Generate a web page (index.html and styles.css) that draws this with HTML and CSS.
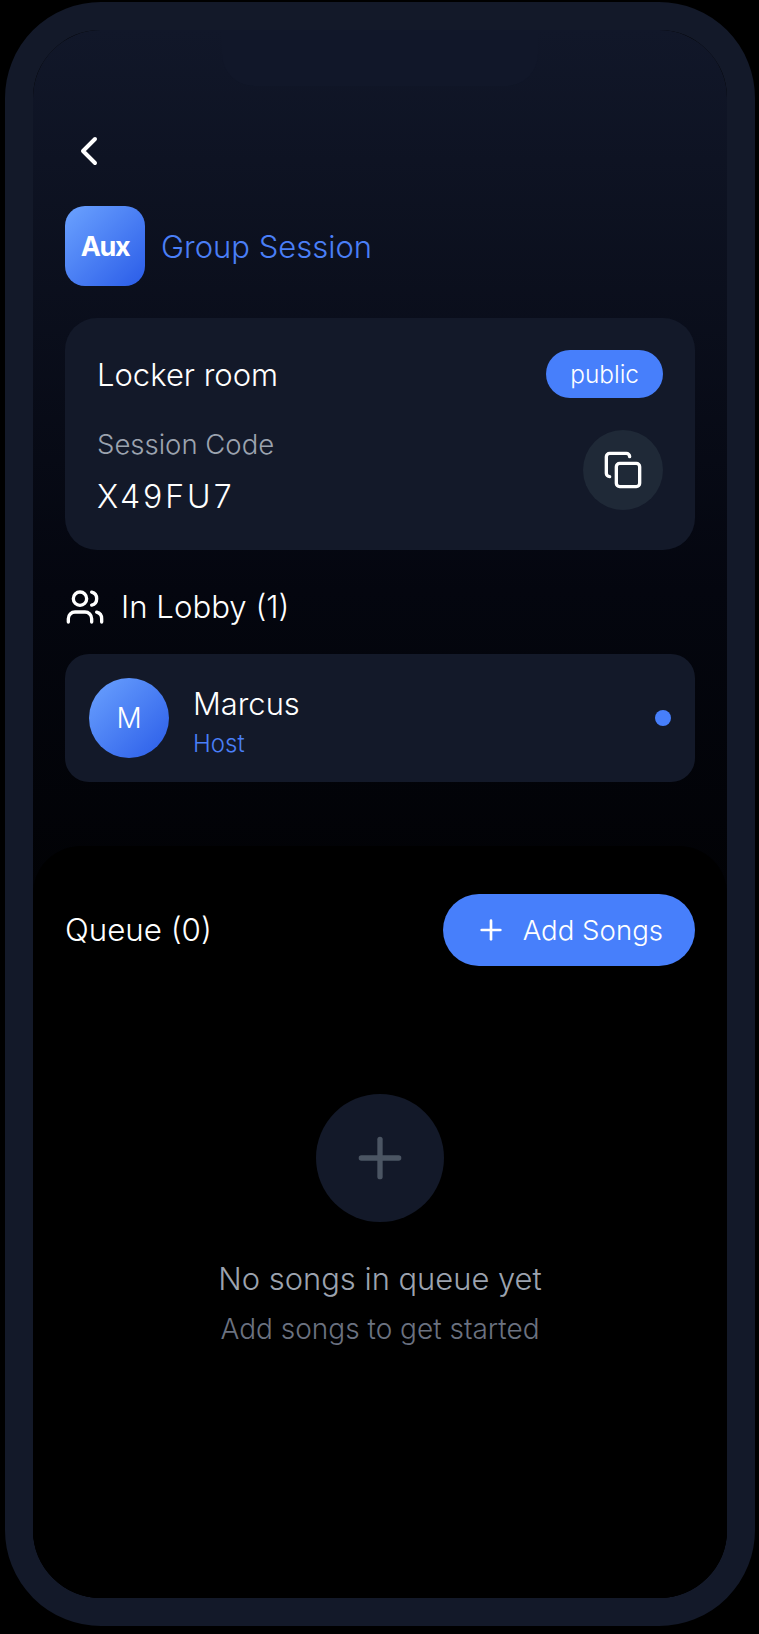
FILE: index.html
```html
<!DOCTYPE html>
<html lang="en">
  <head>
    <meta charset="UTF-8" />
    <meta name="viewport" content="width=device-width, initial-scale=1.0" />
    <title>Group Session</title>
    <link rel="stylesheet" href="styles.css">
  </head>
  <body>
    <div class="phone">
      <div class="screen">
        <div class="notch"></div>
        <main class="session">
          <button class="back-button">
            <svg class="icon icon--back" viewBox="0 0 24 24"><path d="m15 18-6-6 6-6"/></svg>
          </button>
          <div class="brand">
            <div class="brand__logo">Aux</div>
            <h1 class="brand__title">Group Session</h1>
          </div>
          <section class="room-card">
            <div class="room-card__top">
              <p class="room-card__name">Locker room</p>
              <span class="badge">public</span>
            </div>
            <div class="room-card__bottom">
              <div>
                <p class="room-card__label">Session Code</p>
                <p class="room-card__code">X49FU7</p>
              </div>
              <button class="copy-button">
                <svg class="icon icon--copy" viewBox="0 0 24 24">
                  <rect width="14" height="14" x="8" y="8" rx="2" ry="2"/>
                  <path d="M4 16c-1.1 0-2-.9-2-2V4c0-1.1.9-2 2-2h10c1.1 0 2 .9 2 2"/>
                </svg>
              </button>
            </div>
          </section>
          <div class="lobby-title">
            <svg class="icon icon--users" viewBox="0 0 24 24">
              <path d="M16 21v-2a4 4 0 0 0-4-4H6a4 4 0 0 0-4 4v2"/>
              <circle cx="9" cy="7" r="4"/>
              <path d="M22 21v-2a4 4 0 0 0-3-3.87"/>
              <path d="M16 3.13a4 4 0 0 1 0 7.75"/>
            </svg>
            <h2 class="lobby-title__text">In Lobby (1)</h2>
          </div>
          <div class="member">
            <div class="member__avatar">M</div>
            <div class="member__info">
              <p class="member__name">Marcus</p>
              <p class="member__role">Host</p>
            </div>
            <span class="member__dot"></span>
          </div>
        </main>
        <section class="queue">
          <div class="queue__header">
            <h2 class="queue__title">Queue (0)</h2>
            <button class="add-button">
              <svg class="icon icon--add" viewBox="0 0 24 24"><path d="M5 12h14"/><path d="M12 5v14"/></svg>
              Add Songs
            </button>
          </div>
          <div class="empty">
            <div class="empty__circle">
              <svg class="icon icon--empty" viewBox="0 0 24 24"><path d="M5 12h14"/><path d="M12 5v14"/></svg>
            </div>
            <p class="empty__title">No songs in queue yet</p>
            <p class="empty__text">Add songs to get started</p>
          </div>
        </section>
      </div>
    </div>
  </body>
</html>
```

FILE: styles.css
```css
html {
  background-color: #000;
}
body {
  margin: 0;
  padding: 2px 0 0 5px;
  font-family: Inter, "Liberation Sans", sans-serif;
  font-weight: 350;
  color: #fff;
}
p,
h1,
h2 {
  margin: 0;
  font-weight: 350;
}
button {
  padding: 0;
  border: 0;
  font-family: inherit;
  font-weight: inherit;
  color: inherit;
  cursor: pointer;
}
.icon {
  display: block;
  fill: none;
  stroke: currentColor;
  stroke-width: 2;
  stroke-linecap: round;
  stroke-linejoin: round;
}
.phone {
  box-sizing: border-box;
  width: 750px;
  height: 1624px;
  border: 28px solid #131929;
  border-radius: 96px;
  background-color: #000;
}
.screen {
  position: relative;
  display: flex;
  flex-direction: column;
  height: 100%;
  border-radius: 68px;
  overflow: hidden;
  background: linear-gradient(180deg, #111729 0, #04060f 560px, #000 1000px);
}
.notch {
  position: absolute;
  top: 0;
  left: 189px;
  width: 316px;
  height: 56px;
  border-radius: 0 0 32px 32px;
  background-color: #111729;
}
.session {
  padding: 97px 32px 64px;
}
.back-button {
  display: block;
  width: 48px;
  height: 48px;
  background: none;
}
.icon--back {
  width: 48px;
  height: 48px;
}
.brand {
  display: flex;
  align-items: center;
  gap: 16px;
  margin-top: 31px;
}
.brand__logo {
  display: flex;
  align-items: center;
  justify-content: center;
  width: 80px;
  height: 80px;
  border-radius: 20px;
  background: linear-gradient(135deg, #6ba2ff, #2a5ce8);
  font-size: 27px;
  font-weight: 700;
  letter-spacing: -1.4px;
}
.brand__title {
  font-size: 31px;
  color: #4a7ff7;
}
.room-card {
  box-sizing: border-box;
  height: 232px;
  margin-top: 32px;
  padding: 32px;
  border-radius: 32px;
  background-color: #131929;
}
.room-card__top {
  display: flex;
  align-items: center;
  justify-content: space-between;
}
.room-card__name {
  font-size: 31px;
}
.badge {
  padding: 0 24px;
  border-radius: 24px;
  background-color: #477ffb;
  font-size: 24.4px;
  line-height: 48px;
}
.room-card__bottom {
  display: flex;
  align-items: flex-start;
  justify-content: space-between;
  margin-top: 29px;
}
.room-card__label {
  font-size: 27.5px;
  color: #9ca3af;
}
.room-card__code {
  margin-top: 16px;
  font-size: 32px;
  letter-spacing: 3px;
}
.copy-button {
  margin-top: 3px;
  padding: 20px;
  border-radius: 50%;
  background-color: #1f2937;
}
.icon--copy {
  width: 40px;
  height: 40px;
}
.lobby-title {
  display: flex;
  align-items: center;
  gap: 16px;
  margin-top: 37px;
}
.icon--users {
  width: 40px;
  height: 40px;
}
.lobby-title__text {
  font-size: 31.2px;
}
.member {
  display: flex;
  align-items: center;
  gap: 24px;
  margin-top: 27px;
  padding: 24px;
  border-radius: 24px;
  background-color: #131929;
}
.member__avatar {
  display: flex;
  align-items: center;
  justify-content: center;
  width: 80px;
  height: 80px;
  border-radius: 50%;
  background: linear-gradient(135deg, #6ba2ff, #2a5ce8);
  font-size: 28px;
}
.member__info {
  flex: 1;
  padding-top: 6px;
}
.member__name {
  font-size: 30.9px;
}
.member__role {
  margin-top: 7px;
  font-size: 24px;
  color: #4a7ff7;
}
.member__dot {
  width: 16px;
  height: 16px;
  border-radius: 50%;
  background-color: #477ffb;
}
.queue {
  flex: 1;
  padding: 48px 32px 0;
  border-radius: 48px 48px 0 0;
  background-color: #000;
}
.queue__header {
  display: flex;
  align-items: center;
  justify-content: space-between;
}
.queue__title {
  font-size: 31.3px;
}
.add-button {
  display: flex;
  align-items: center;
  gap: 16px;
  height: 72px;
  padding: 0 32px;
  border-radius: 36px;
  background-color: #477ffb;
  font-size: 27.6px;
}
.icon--add {
  width: 32px;
  height: 32px;
}
.empty {
  display: flex;
  flex-direction: column;
  align-items: center;
  margin-top: 128px;
}
.empty__circle {
  display: flex;
  align-items: center;
  justify-content: center;
  width: 128px;
  height: 128px;
  border-radius: 50%;
  background-color: #131929;
  color: #4b5563;
}
.icon--empty {
  width: 64px;
  height: 64px;
}
.empty__title {
  margin-top: 38px;
  font-size: 30.9px;
  color: #9ca3af;
}
.empty__text {
  margin-top: 15px;
  font-size: 28px;
  color: #6b7280;
}
```
